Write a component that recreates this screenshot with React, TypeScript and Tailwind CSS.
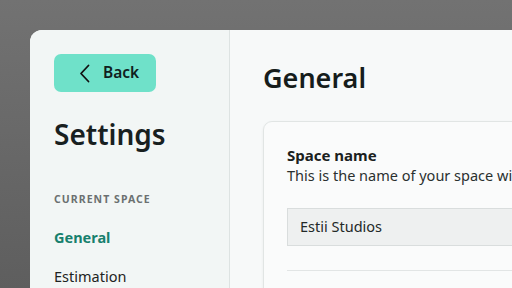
import React from "react";

export default function App() {
  return (
    <div
      className="w-[512px] h-[288px] overflow-hidden pl-[30px] pt-[30px] bg-[linear-gradient(180deg,#727272_0%,#5e5e5e_100%)]"
      style={{ fontFamily: '"Noto Sans", sans-serif' }}
    >
      <div className="flex w-[600px] h-[400px] rounded-tl-[12px] overflow-hidden bg-[#f7f9f9]">
        <aside className="w-[200px] shrink-0 bg-[#f2f6f5] border-r border-[#dde3e2] pl-[24px] pt-[24px]">
          <button className="flex items-center w-[102px] h-[38px] rounded-[7px] bg-[#6fe1c9] text-[#10201d] pl-[25px]">
            <svg width="11" height="19" viewBox="0 0 11 19" fill="none" className="mr-[13px]">
              <path d="M9.5 1.5 L2 9.5 L9.5 17.5" stroke="#111" strokeWidth="1.8" strokeLinecap="round" strokeLinejoin="round" />
            </svg>
            <span className="text-[15.5px] font-semibold leading-none">Back</span>
          </button>
          <h1 className="mt-[22px] text-[28px] font-semibold text-[#18201f] leading-[40px]">Settings</h1>
          <div className="mt-[40px] text-[10.5px] font-bold tracking-[0.1em] text-[#6b7070] leading-none">CURRENT SPACE</div>
          <div className="mt-[25px] text-[14.5px] font-bold text-[#17806d] leading-none">General</div>
          <div className="mt-[25px] text-[14.5px] text-[#1d2322] leading-none">Estimation</div>
        </aside>
        <main className="flex-1 pl-[33px] pt-[26px]">
          <h2 className="text-[27px] font-semibold text-[#161d1c] leading-[44px]">General</h2>
          <div className="mt-[21px] w-[400px] h-[300px] rounded-[9px] border border-[#e1e5e4] bg-[#fafbfb] shadow-[0_1px_3px_rgba(0,0,0,0.06)] pl-[23px] pt-[23px]">
            <div className="text-[15px] font-bold text-[#1a2120] leading-[20px]">Space name</div>
            <div className="text-[14.5px] text-[#2a302f] leading-[20px] whitespace-nowrap">This is the name of your space within Estii</div>
            <div className="mt-[23px] h-[38px] w-[300px] bg-[#eef0f0] border border-[#d9dddd] flex items-center pl-[12px] text-[14.5px] text-[#232928]">Estii Studios</div>
            <div className="mt-[24px] h-px w-[300px] bg-[#e2e5e5]" />
          </div>
        </main>
      </div>
    </div>
  );
}
